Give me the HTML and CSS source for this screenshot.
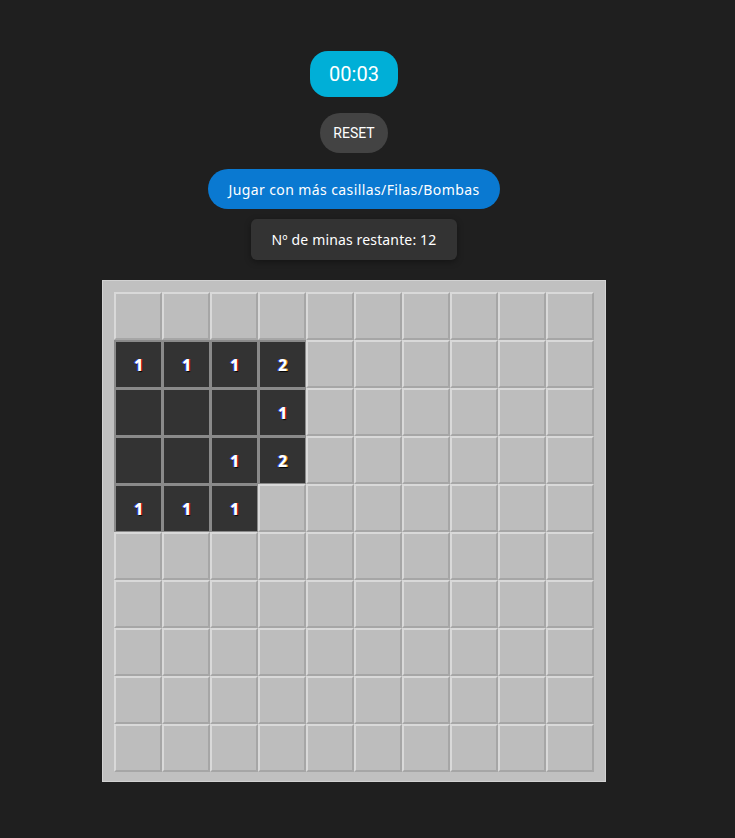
FILE: index.html
```html
<!DOCTYPE html>
<html lang="es">
<head>
<meta charset="utf-8">
<title>Buscaminas</title>
<link rel="stylesheet" href="styles.css">
</head>
<body>
<div class="app">
  <div class="timer">00:03</div>
  <button class="reset">RESET</button>
  <button class="more">Jugar con más casillas/Filas/Bombas</button>
  <div class="mines">Nº de minas restante: 12</div>
  <div class="board">
    <div class="cell"></div><div class="cell"></div><div class="cell"></div><div class="cell"></div><div class="cell"></div><div class="cell"></div><div class="cell"></div><div class="cell"></div><div class="cell"></div><div class="cell"></div>
    <div class="cell open">1</div><div class="cell open">1</div><div class="cell open">1</div><div class="cell open n2">2</div><div class="cell"></div><div class="cell"></div><div class="cell"></div><div class="cell"></div><div class="cell"></div><div class="cell"></div>
    <div class="cell open"></div><div class="cell open"></div><div class="cell open"></div><div class="cell open">1</div><div class="cell"></div><div class="cell"></div><div class="cell"></div><div class="cell"></div><div class="cell"></div><div class="cell"></div>
    <div class="cell open"></div><div class="cell open"></div><div class="cell open">1</div><div class="cell open n2">2</div><div class="cell"></div><div class="cell"></div><div class="cell"></div><div class="cell"></div><div class="cell"></div><div class="cell"></div>
    <div class="cell open">1</div><div class="cell open">1</div><div class="cell open">1</div><div class="cell"></div><div class="cell"></div><div class="cell"></div><div class="cell"></div><div class="cell"></div><div class="cell"></div><div class="cell"></div>
    <div class="cell"></div><div class="cell"></div><div class="cell"></div><div class="cell"></div><div class="cell"></div><div class="cell"></div><div class="cell"></div><div class="cell"></div><div class="cell"></div><div class="cell"></div>
    <div class="cell"></div><div class="cell"></div><div class="cell"></div><div class="cell"></div><div class="cell"></div><div class="cell"></div><div class="cell"></div><div class="cell"></div><div class="cell"></div><div class="cell"></div>
    <div class="cell"></div><div class="cell"></div><div class="cell"></div><div class="cell"></div><div class="cell"></div><div class="cell"></div><div class="cell"></div><div class="cell"></div><div class="cell"></div><div class="cell"></div>
    <div class="cell"></div><div class="cell"></div><div class="cell"></div><div class="cell"></div><div class="cell"></div><div class="cell"></div><div class="cell"></div><div class="cell"></div><div class="cell"></div><div class="cell"></div>
    <div class="cell"></div><div class="cell"></div><div class="cell"></div><div class="cell"></div><div class="cell"></div><div class="cell"></div><div class="cell"></div><div class="cell"></div><div class="cell"></div><div class="cell"></div>
  </div>
</div>
</body>
</html>
```

FILE: styles.css
```css
html, body {
  margin: 0;
  padding: 0;
  background: #1f1f1f;
}
body {
  font-family: "Noto Sans", "Open Sans", sans-serif;
  color: #fff;
}
.app {
  width: 708px;
  display: flex;
  flex-direction: column;
  align-items: center;
  padding-top: 51px;
}
.timer {
  width: 88px;
  height: 46px;
  border-radius: 18px;
  background: #00afd7;
  display: flex;
  align-items: center;
  justify-content: center;
  font-family: Roboto, sans-serif;
  font-size: 20px;
  color: #fff;
}
.reset {
  margin-top: 16px;
  width: 68px;
  height: 40px;
  border: none;
  border-radius: 20px;
  background: #434343;
  color: #fff;
  font-family: Roboto, sans-serif;
  font-size: 14px;
  font-weight: 400;
  padding: 0;
}
.more {
  margin-top: 16px;
  width: 292px;
  height: 40px;
  border: none;
  border-radius: 20px;
  background: #0a79d1;
  color: #fff;
  font-family: "Noto Sans", sans-serif;
  font-size: 14px;
  letter-spacing: 0.4px;
  padding: 0;
}
.mines {
  margin-top: 10px;
  width: 206px;
  height: 41px;
  border-radius: 6px;
  background: #333333;
  box-shadow: 0 2px 6px rgba(0,0,0,0.35);
  display: flex;
  align-items: center;
  justify-content: center;
  font-size: 14px;
  letter-spacing: 0.15px;
}
.board {
  margin-top: 20px;
  box-sizing: border-box;
  width: 504px;
  height: 502px;
  padding: 11px 11px 10px 11px;
  background: #c0c0c0;
  border: 1px solid #d2d2d2;
  display: grid;
  grid-template-columns: repeat(10, 48px);
  grid-template-rows: repeat(10, 48px);
}
.cell {
  box-sizing: border-box;
  background: #bdbdbd;
  border: 2px solid;
  border-color: #d9d9d9 #a6a6a6 #a6a6a6 #d9d9d9;
}
.cell.open {
  background: #333333;
  border: 2px solid #8a8a8a;
  border-right-width: 1px;
  border-bottom-width: 1px;
  display: flex;
  align-items: center;
  justify-content: center;
  font-family: "Noto Sans", sans-serif;
  font-weight: 800;
  font-size: 16px;
  color: #fff;
  text-shadow: -1px 0 #2a3cd0, 1px 0 #d01818, 1px 1px 1px #000;
}
.cell.open.n2 {
  text-shadow: -1px 0 #2a3cd0, 1px 0 #e0a020, 1px 1px 1px #000;
}
```
